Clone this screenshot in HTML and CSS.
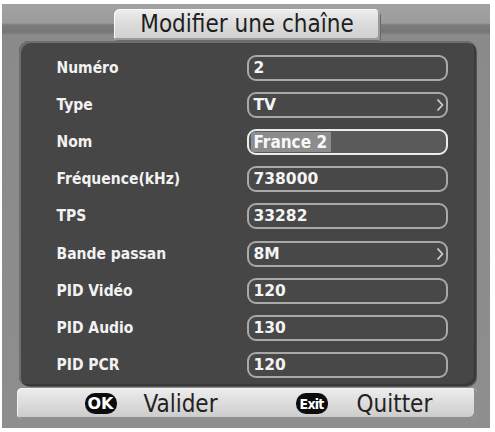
FILE: index.html
```html
<!DOCTYPE html>
<html lang="fr">
<head>
<meta charset="utf-8">
<title>Modifier une chaîne</title>
<link rel="stylesheet" href="styles.css">
</head>
<body>
<div class="screen">
  <div class="title-row">
    <div class="title-tab">Modifier une chaîne</div>
  </div>
  <div class="panel">
    <div class="row"><span class="label">Numéro</span><span class="field">2</span></div>
    <div class="row"><span class="label">Type</span><span class="field">TV<svg class="arrow" viewBox="0 0 8 14" width="8" height="14"><path d="M1.5 1.5 L6.5 7 L1.5 12.5" fill="none" stroke="#d0d0d0" stroke-width="1.8" stroke-linejoin="round"/></svg></span></div>
    <div class="row"><span class="label">Nom</span><span class="field field-active"><span class="sel">France 2</span></span></div>
    <div class="row"><span class="label">Fréquence(kHz)</span><span class="field">738000</span></div>
    <div class="row"><span class="label">TPS</span><span class="field">33282</span></div>
    <div class="row"><span class="label">Bande passan</span><span class="field">8M<svg class="arrow" viewBox="0 0 8 14" width="8" height="14"><path d="M1.5 1.5 L6.5 7 L1.5 12.5" fill="none" stroke="#d0d0d0" stroke-width="1.8" stroke-linejoin="round"/></svg></span></div>
    <div class="row"><span class="label">PID Vidéo</span><span class="field">120</span></div>
    <div class="row"><span class="label">PID Audio</span><span class="field">130</span></div>
    <div class="row"><span class="label">PID PCR</span><span class="field">120</span></div>
  </div>
  <div class="footer">
    <div class="action"><span class="key key-ok">OK</span><span class="action-text">Valider</span></div>
    <div class="action action-exit"><span class="key key-exit">Exit</span><span class="action-text">Quitter</span></div>
  </div>
</div>
</body>
</html>
```
FILE: styles.css
```css
html, body {
  margin: 0;
  padding: 0;
  background: #ffffff;
}
body {
  padding: 4px 0 0 2px;
  font-family: "DejaVu Sans", Verdana, sans-serif;
}
.screen {
  width: 488px;
  height: 424px;
  background: linear-gradient(to bottom, #a2a2a2 0px, #9c9c9c 19px, #7c7c7c 21px, #767676 28px, #8a8a8a 31px, #8e8e8e 100%);
  display: flex;
  flex-direction: column;
  align-items: center;
}
.title-row {
  height: 37px;
  padding-top: 5px;
  box-sizing: border-box;
  display: flex;
  justify-content: center;
  width: 100%;
  position: relative;
  z-index: 1;
}
.title-tab {
  width: 266px;
  height: 31px;
  box-sizing: border-box;
  margin-left: 2px;
  background: linear-gradient(to bottom, #eeeeee 0%, #dcdcdc 45%, #cfcfcf 100%);
  border-radius: 6px 6px 3px 3px;
  box-shadow: inset -2px -2px 0 #9a9a9a, inset 1px 1px 0 #f8f8f8, 1px 1px 0 #6a6a6a;
  color: #1e1e1e;
  font-family: "DejaVu Sans Condensed", "DejaVu Sans", sans-serif;
  font-size: 24px;
  text-align: center;
  line-height: 30px;
}
.panel {
  width: 457px;
  height: 345px;
  box-sizing: border-box;
  margin-left: 2px;
  padding: 8px 0 0 38px;
  background: #464646;
  border-radius: 10px;
  box-shadow: inset 2px 2px 0 #6e6e6e, inset -2px -2px 0 #3a3a3a, 1px 1px 0 #555;
  display: flex;
  flex-direction: column;
}
.row {
  height: 37.2px;
  display: flex;
  align-items: center;
}
.label {
  width: 190px;
  color: #f2f2f2;
  font-family: "DejaVu Sans Condensed", "DejaVu Sans", sans-serif;
  font-size: 15.5px;
  font-weight: bold;
}
.field {
  width: 201px;
  height: 26px;
  box-sizing: border-box;
  border: 2px solid #a9a9a9;
  border-radius: 9px;
  background: #484848;
  color: #f4f4f4;
  font-size: 15.5px;
  font-weight: bold;
  padding-left: 5px;
  display: flex;
  align-items: center;
  justify-content: space-between;
}
.arrow {
  margin-right: 2px;
}
.field-active {
  border-color: #ececec;
  background: #5a5a5a;
  padding-left: 2px;
}
.sel {
  background: #8c8c8c;
  height: 20px;
  line-height: 20px;
  padding: 0 4px 0 3px;
  font-family: "DejaVu Sans Condensed", "DejaVu Sans", sans-serif;
  font-size: 17px;
  font-weight: bold;
  color: #f8f8f8;
}
.footer {
  width: 460px;
  height: 31px;
  box-sizing: border-box;
  margin-top: 2px;
  margin-left: 1px;
  background: linear-gradient(to bottom, #ededed 0%, #dcdcdc 50%, #cacaca 100%);
  border-radius: 5px;
  box-shadow: inset -3px -2px 0 #8e8e8e, inset 1px 1px 0 #f4f4f4;
  display: flex;
  align-items: center;
}
.action {
  display: flex;
  align-items: center;
}
.action:first-child {
  margin-left: 68px;
}
.action-exit {
  margin-left: 78px;
}
.action-exit .action-text {
  margin-left: 29px;
}
.key {
  height: 21px;
  background: #0c0c0c;
  color: #ffffff;
  border-radius: 10px;
  font-weight: bold;
  display: flex;
  align-items: center;
  justify-content: center;
}
.key-ok {
  width: 32px;
  font-size: 16px;
}
.key-exit {
  width: 32px;
  font-family: "DejaVu Sans Condensed", "DejaVu Sans", sans-serif;
  font-size: 14px;
  letter-spacing: -0.8px;
}
.action-text {
  color: #222222;
  font-family: "DejaVu Sans Condensed", "DejaVu Sans", sans-serif;
  font-size: 24px;
  margin-left: 27px;
}
```
